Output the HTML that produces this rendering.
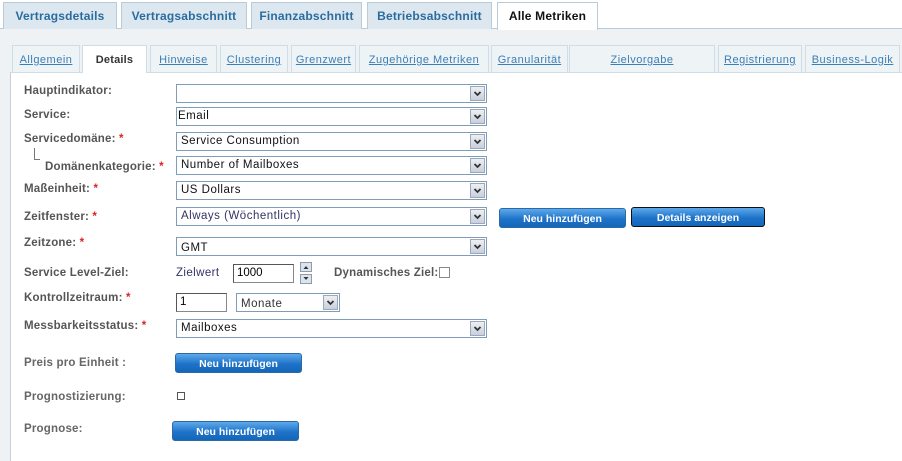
<!DOCTYPE html>
<html><head><meta charset="utf-8"><style>
*{box-sizing:border-box;margin:0;padding:0}
body{width:902px;height:461px;background:#fff;position:relative;overflow:hidden;font-family:"Liberation Sans",sans-serif;font-size:11.5px}
.a{position:absolute}
.tt{position:absolute;top:2px;height:27px;background:#dce7ef;border:1px solid #b9cbd8;border-bottom:none;color:#2b6c9f;font-weight:bold;font-size:12px;text-align:center;line-height:26px;letter-spacing:.2px}
.st{position:absolute;top:45px;height:27px;background:#eef3f6;border:1px solid #cfdde6;border-bottom:none;color:#3a7fb8;text-decoration:underline;font-size:11px;text-align:center;line-height:28px;letter-spacing:.5px}
.lb{position:absolute;left:24px;font-weight:bold;color:#555;font-size:11.5px;letter-spacing:.2px}
.r{color:#d22}
.sel{position:absolute;height:19px;border:1px solid #7f9db9;background:#fff;font-size:11.5px;line-height:16px;padding-left:4px;color:#111;letter-spacing:.5px}
.sel svg{position:absolute;right:1px;top:1px;width:15px;height:15px}
.btn{position:absolute;height:20px;border-radius:3px;background:linear-gradient(#5ea9ea,#1e73c9 55%,#1466b8);color:#fff;font-weight:bold;font-size:10.5px;text-align:center;line-height:20px;border:1px solid #2a6aa8}
.inp{position:absolute;height:19px;border:1px solid #888;border-top-color:#555;border-left-color:#555;background:#fff;padding-left:3px;line-height:16px;font-size:11.5px}
</style></head><body>
<svg width="0" height="0" style="position:absolute"><defs><symbol id="dd" viewBox="0 0 15 15"><defs><linearGradient id="g" x1="0" y1="0" x2="0" y2="1"><stop offset="0" stop-color="#eef1f5"/><stop offset="1" stop-color="#c6ceda"/></linearGradient></defs><rect x=".5" y=".5" width="14" height="14" fill="url(#g)" stroke="#9aa8ba"/><path d="M4.5 6 L7.5 9 L10.5 6" fill="none" stroke="#333" stroke-width="1.8"/></symbol></defs></svg>
<div class="a" style="left:0;top:28px;width:902px;height:433px;background:#eef2f5"></div>
<div class="a" style="left:0;top:28px;width:902px;height:1px;background:#b9cbd8"></div>
<div class="tt" style="left:3px;width:114px">Vertragsdetails</div>
<div class="tt" style="left:121px;width:126px">Vertragsabschnitt</div>
<div class="tt" style="left:251px;width:111px">Finanzabschnitt</div>
<div class="tt" style="left:367px;width:125px">Betriebsabschnitt</div>
<div class="tt" style="left:497px;width:101px;height:28px;background:#fff;color:#111">Alle Metriken</div>
<div class="a" style="left:10px;top:72px;width:892px;height:389px;background:#fff;border-left:1px solid #c4d0d8;border-top:1px solid #cfdde6"></div>
<div class="st" style="left:12px;width:68px">Allgemein</div>
<div class="st" style="left:82px;width:65px;background:#fff;color:#333;text-decoration:none;font-weight:bold;height:28px;letter-spacing:.2px">Details</div>
<div class="st" style="left:150px;width:67px">Hinweise</div>
<div class="st" style="left:220px;width:68px">Clustering</div>
<div class="st" style="left:291px;width:65px">Grenzwert</div>
<div class="st" style="left:359px;width:130px">Zugehörige Metriken</div>
<div class="st" style="left:491px;width:77px">Granularität</div>
<div class="st" style="left:569px;width:146px">Zielvorgabe</div>
<div class="st" style="left:718px;width:84px">Registrierung</div>
<div class="st" style="left:805px;width:95px">Business-Logik</div>

<div class="lb" style="top:85px">Hauptindikator:</div>
<div class="sel" style="left:176px;top:84px;width:311px"><svg><use href="#dd"/></svg></div>
<div class="lb" style="top:109px">Service:</div>
<div class="sel" style="left:176px;top:107px;width:311px;padding-left:1px">Email<svg><use href="#dd"/></svg></div>
<div class="lb" style="top:133px">Servicedomäne: <span class="r">*</span></div>
<div class="sel" style="left:176px;top:132px;width:311px">Service Consumption<svg><use href="#dd"/></svg></div>
<div class="a" style="left:34px;top:148px;width:1px;height:12px;background:#777"></div>
<div class="a" style="left:34px;top:159px;width:6px;height:1px;background:#777"></div>
<div class="lb" style="left:45px;top:161px">Domänenkategorie: <span class="r">*</span></div>
<div class="sel" style="left:176px;top:156px;width:311px">Number of Mailboxes<svg><use href="#dd"/></svg></div>
<div class="lb" style="top:183px">Maßeinheit: <span class="r">*</span></div>
<div class="sel" style="left:176px;top:181px;width:311px">US Dollars<svg><use href="#dd"/></svg></div>
<div class="lb" style="top:211px">Zeitfenster: <span class="r">*</span></div>
<div class="sel" style="left:176px;top:207px;width:311px;color:#333366">Always (Wöchentlich)<svg><use href="#dd"/></svg></div>
<div class="btn" style="left:499px;top:208px;width:127px">Neu hinzufügen</div>
<div class="btn" style="left:631px;top:207px;width:134px;border-color:#111">Details anzeigen</div>
<div class="lb" style="top:237px">Zeitzone: <span class="r">*</span></div>
<div class="sel" style="left:176px;top:237px;width:311px;padding-top:2px">GMT<svg><use href="#dd"/></svg></div>
<div class="lb" style="top:267px">Service Level-Ziel:</div>
<div class="a" style="left:176px;top:267px;color:#333366;letter-spacing:.4px">Zielwert</div>
<div class="inp" style="left:233px;top:264px;width:61px">1000</div>
<svg class="a" style="left:300px;top:262px" width="13" height="22"><rect x=".5" y=".5" width="11" height="9" fill="#dde3ea" stroke="#8a9db0"/><path d="M3.5 7 L6 4 L8.5 7Z" fill="#333"/><rect x=".5" y="12.5" width="11" height="9" fill="#dde3ea" stroke="#8a9db0"/><path d="M3.5 15 L6 18 L8.5 15Z" fill="#333"/></svg>
<div class="lb" style="left:334px;top:267px">Dynamisches Ziel:</div>
<div class="a" style="left:439px;top:267px;width:11px;height:11px;border:1px solid #888;background:#fff"></div>
<div class="lb" style="top:292px">Kontrollzeitraum: <span class="r">*</span></div>
<div class="inp" style="left:176px;top:293px;width:51px">1</div>
<div class="sel" style="left:236px;top:293px;width:104px;color:#333;padding-top:2px">Monate<svg><use href="#dd"/></svg></div>
<div class="lb" style="top:320px">Messbarkeitsstatus: <span class="r">*</span></div>
<div class="sel" style="left:176px;top:319px;width:311px">Mailboxes<svg><use href="#dd"/></svg></div>
<div class="lb" style="top:357px;color:#666">Preis pro Einheit :</div>
<div class="btn" style="left:175px;top:353px;width:127px">Neu hinzufügen</div>
<div class="lb" style="top:391px;color:#666">Prognostizierung:</div>
<div class="a" style="left:177px;top:392px;width:8px;height:8px;border:1px solid #555"></div>
<div class="lb" style="top:423px;color:#666">Prognose:</div>
<div class="btn" style="left:172px;top:421px;width:127px">Neu hinzufügen</div>
</body></html>
